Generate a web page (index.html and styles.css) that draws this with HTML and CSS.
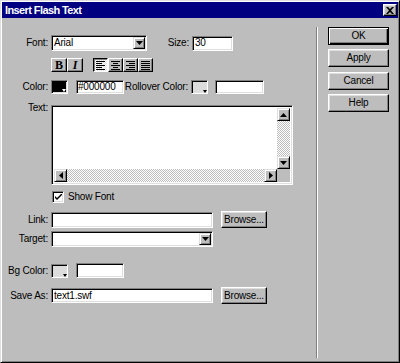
FILE: index.html
```html
<!DOCTYPE html>
<html>
<head>
<meta charset="utf-8">
<link rel="stylesheet" href="styles.css">
</head>
<body>
<div class="win">
  <div class="titlebar">
    <span class="title">Insert Flash Text</span>
    <span class="closebtn"><svg width="8" height="7" viewBox="0 0 8 7"><path d="M0 0h2l2 2 2-2h2L5 3.5 8 7H6L4 5 2 7H0l3-3.5z" fill="#000"/></svg></span>
  </div>
  <div class="main">
    <div class="form">
      <div class="row r1">
        <span class="lbl">Font:</span>
        <div class="field select w-font"><span class="val">Arial</span><span class="dd"><svg width="7" height="4" viewBox="0 0 7 4"><path d="M0 0h7L3.5 4z" fill="#000"/></svg></span></div>
        <span class="lbl lbl-size">Size:</span>
        <div class="field w-size">30</div>
      </div>
      <div class="row r2">
        <span class="lbl"></span>
        <span class="tbtn bold">B</span><span class="tbtn ital">I</span>
        <div class="aligns">
          <span class="abtn pressed"><svg width="9" height="9" viewBox="0 0 9 9"><path d="M0 0h9v1H0zM0 2h6v1H0zM0 4h9v1H0zM0 6h6v1H0zM0 8h9v1H0z" fill="#000"/></svg></span>
          <span class="abtn"><svg width="9" height="9" viewBox="0 0 9 9"><path d="M0 0h9v1H0zM2 2h5v1H2zM0 4h9v1H0zM2 6h5v1H2zM0 8h9v1H0z" fill="#000"/></svg></span>
          <span class="abtn"><svg width="9" height="9" viewBox="0 0 9 9"><path d="M0 0h9v1H0zM3 2h6v1H3zM0 4h9v1H0zM3 6h6v1H3zM0 8h9v1H0z" fill="#000"/></svg></span>
          <span class="abtn"><svg width="9" height="9" viewBox="0 0 9 9"><path d="M0 0h9v1H0zM0 2h9v1H0zM0 4h9v1H0zM0 6h9v1H0zM0 8h9v1H0z" fill="#000"/></svg></span>
        </div>
      </div>
      <div class="row r3">
        <span class="lbl">Color:</span>
        <span class="swatch black"></span>
        <div class="field w-hex">#000000</div>
        <span class="lbl lbl-roll">Rollover Color:</span>
        <span class="swatch light"></span>
        <div class="field w-roll"></div>
      </div>
      <div class="row r4">
        <span class="lbl lbl-top">Text:</span>
        <div class="field textarea">
          <div class="ta-body"></div>
          <div class="vscroll">
            <span class="sbtn"><svg width="7" height="4" viewBox="0 0 7 4"><path d="M0 4h7L3.5 0z" fill="#000"/></svg></span>
            <span class="strack"></span>
            <span class="sbtn"><svg width="7" height="4" viewBox="0 0 7 4"><path d="M0 0h7L3.5 4z" fill="#000"/></svg></span>
          </div>
          <div class="hscroll">
            <span class="sbtn"><svg width="4" height="7" viewBox="0 0 4 7"><path d="M4 0v7L0 3.5z" fill="#000"/></svg></span>
            <span class="strack"></span>
            <span class="sbtn"><svg width="4" height="7" viewBox="0 0 4 7"><path d="M0 0v7L4 3.5z" fill="#000"/></svg></span>
          </div>
          <div class="corner"></div>
        </div>
      </div>
      <div class="row r5">
        <span class="lbl"></span>
        <span class="check"><svg width="7" height="7" viewBox="0 0 7 7"><path d="M0 2v2l2 2 5-5V-1L2 4z" fill="#000"/></svg></span>
        <span class="check-lbl">Show Font</span>
      </div>
      <div class="row r6">
        <span class="lbl">Link:</span>
        <div class="field w-long"></div>
        <span class="btn browse">Browse...</span>
      </div>
      <div class="row r7">
        <span class="lbl">Target:</span>
        <div class="field select w-long"><span class="val"></span><span class="dd"><svg width="7" height="4" viewBox="0 0 7 4"><path d="M0 0h7L3.5 4z" fill="#000"/></svg></span></div>
      </div>
      <div class="row r8">
        <span class="lbl">Bg Color:</span>
        <span class="swatch light"></span>
        <div class="field w-hex"></div>
      </div>
      <div class="row r9">
        <span class="lbl">Save As:</span>
        <div class="field w-long">text1.swf</div>
        <span class="btn browse">Browse...</span>
      </div>
    </div>
    <div class="sep"></div>
    <div class="btns">
      <span class="btn dlg default">OK</span>
      <span class="btn dlg">Apply</span>
      <span class="btn dlg b-cancel">Cancel</span>
      <span class="btn dlg b-help">Help</span>
    </div>
  </div>
</div>
</body>
</html>
```

FILE: styles.css
```css
* { box-sizing: border-box; }
html, body { margin: 0; padding: 0; }
body {
  background: #bdbdbd;
  font-family: "Liberation Sans", Arial, sans-serif;
  font-size: 10px;
  letter-spacing: -0.2px;
  line-height: 12px;
  color: #000;
}
.win {
  width: 400px;
  height: 363px;
  background: #bdbdbd;
  border: 1px solid;
  border-color: #dfdfdf #000 #000 #dfdfdf;
  box-shadow: inset 1px 1px 0 #fff, inset -1px -1px 0 #808080;
  padding: 1px;
  display: flex;
  flex-direction: column;
}
.titlebar {
  height: 16px;
  flex: none;
  background: #000080;
  color: #fff;
  display: flex;
  align-items: center;
  justify-content: space-between;
  padding: 0 1px 0 3px;
  font-size: 11px;
  font-weight: bold;
  letter-spacing: -0.6px;
}
.closebtn {
  width: 14px;
  height: 12px;
  background: #bdbdbd;
  border: 1px solid;
  border-color: #fff #000 #000 #fff;
  box-shadow: inset -1px -1px 0 #808080, inset 1px 1px 0 #dfdfdf;
  display: flex;
  align-items: center;
  justify-content: center;
}
.closebtn svg { display: block; }
.main { flex: 1; display: flex; }
.form { width: 314px; flex: none; display: flex; flex-direction: column; }
.row { display: flex; align-items: center; flex: none; }
.lbl {
  width: 46px;
  margin-right: 3px;
  display: flex;
  justify-content: flex-end;
  flex: none;
  white-space: nowrap;
}
.lbl-top { align-self: flex-start; margin-top: -3px; }

.field {
  background: #fff;
  border: 1px solid;
  border-color: #808080 #fff #fff #808080;
  box-shadow: inset 1px 1px 0 #000, inset -1px -1px 0 #dfdfdf;
  padding: 0 2px;
  display: flex;
  align-items: center;
  height: 100%;
  white-space: nowrap;
  flex: none;
}
.select { padding: 1px 1px 1px 2px; justify-content: space-between; }
.select .val { flex: 1; }
.dd, .sbtn {
  width: 12px;
  height: 12px;
  background: #bdbdbd;
  border: 1px solid;
  border-color: #dfdfdf #000 #000 #dfdfdf;
  box-shadow: inset 1px 1px 0 #fff, inset -1px -1px 0 #808080;
  display: flex;
  align-items: center;
  justify-content: center;
  flex: none;
}
.dd svg, .sbtn svg, .abtn svg, .check svg { display: block; }

.r1 { margin-top: 17px; height: 16px; }
.w-font { width: 96px; }
.lbl-size { width: 42px; margin-right: 3px; }
.w-size { width: 41px; height: 15px; }

.r2 { margin-top: 7px; height: 14px; }
.tbtn {
  width: 16px;
  height: 14px;
  border: 1px solid;
  border-color: #fff #000 #000 #fff;
  box-shadow: inset -1px -1px 0 #808080;
  display: flex;
  align-items: center;
  justify-content: center;
  font-family: "Liberation Serif", serif;
  font-weight: bold;
  font-size: 12px;
}
.ital { font-style: italic; }
.aligns { display: flex; margin-left: 10px; }
.abtn {
  width: 15px;
  height: 14px;
  border: 1px solid;
  border-color: #fff #000 #000 #fff;
  box-shadow: inset -1px -1px 0 #808080;
  display: flex;
  align-items: center;
  justify-content: center;
}
.abtn.pressed {
  border-color: #000 #fff #fff #000;
  box-shadow: inset 1px 1px 0 #808080;
  background: repeating-conic-gradient(#fff 0 25%, #dfdfdf 0 50%) 0 0 / 2px 2px;
}

.r3 { margin-top: 8px; height: 14px; }
.swatch {
  position: relative;
  width: 17px;
  height: 14px;
  flex: none;
  border: 1px solid;
  border-color: #808080 #fff #fff #808080;
  box-shadow: inset 1px 1px 0 #000, inset -1px -1px 0 #dfdfdf;
}
.swatch.black { background: #000; }
.swatch.light { background: #dcdcdc; }
.swatch::after {
  content: "";
  position: absolute;
  right: 0;
  bottom: 0;
  border-left: 2.5px solid transparent;
  border-right: 2.5px solid transparent;
  border-top: 3px solid #000;
}
.swatch.black::after { border-top-color: #fff; right: 1px; bottom: 1px; }
.w-hex { width: 48px; height: 14px; margin-left: 8px; padding-left: 1px; }
.lbl-roll { width: 64px; margin-right: 3px; }
.w-roll { width: 49px; height: 14px; margin-left: 7px; }

.r4 { margin-top: 11px; height: 80px; align-items: stretch; }
.textarea {
  width: 242px;
  padding: 2px;
  display: grid;
  align-items: stretch;
  grid-template-columns: 1fr 13px;
  grid-template-rows: 1fr 13px;
}
.ta-body { background: #fff; }
.vscroll, .hscroll {
  display: flex;
  background: repeating-conic-gradient(#bdbdbd 0 25%, #fff 0 50%) 0 0 / 2px 2px;
}
.vscroll { flex-direction: column; }
.vscroll .sbtn, .hscroll .sbtn { width: 13px; height: 13px; }
.strack { flex: 1; }
.corner { background: #bdbdbd; }

.r5 { margin-top: 6px; height: 12px; }
.check {
  width: 12px;
  height: 12px;
  margin-left: 1px;
  background: #fff;
  border: 1px solid;
  border-color: #808080 #fff #fff #808080;
  box-shadow: inset 1px 1px 0 #000, inset -1px -1px 0 #dfdfdf;
  display: flex;
  align-items: center;
  justify-content: center;
}
.check-lbl { margin-left: 4px; }

.r6 { margin-top: 8px; height: 17px; }
.r6 .field { height: 16px; }
.w-long { width: 162px; }
.btn {
  background: #bdbdbd;
  border: 1px solid;
  border-color: #fff #000 #000 #fff;
  box-shadow: inset -1px -1px 0 #808080, inset 1px 1px 0 #dfdfdf;
  display: flex;
  align-items: center;
  justify-content: center;
  white-space: nowrap;
  flex: none;
}
.browse { width: 46px; height: 17px; margin-left: 8px; }

.r7 { margin-top: 3px; height: 16px; }
.r8 { margin-top: 16px; height: 15px; }
.r8 .field { height: 15px; }
.r9 { margin-top: 9px; height: 17px; }
.r9 .field { height: 15px; }

.sep {
  width: 2px;
  margin-top: 9px;
  height: 331px;
  border-left: 1px solid #808080;
  border-right: 1px solid #fff;
  flex: none;
}
.btns {
  display: flex;
  flex-direction: column;
  padding-left: 10px;
  padding-top: 9px;
}
.dlg { width: 61px; height: 18px; margin-top: 4px; }
.dlg.default { margin-top: 0; }
.b-cancel { margin-top: 5px; }
.dlg.default {
  border-color: #000;
  box-shadow: inset 1px 1px 0 #fff, inset -1px -1px 0 #000, inset -2px -2px 0 #808080;
}
```
